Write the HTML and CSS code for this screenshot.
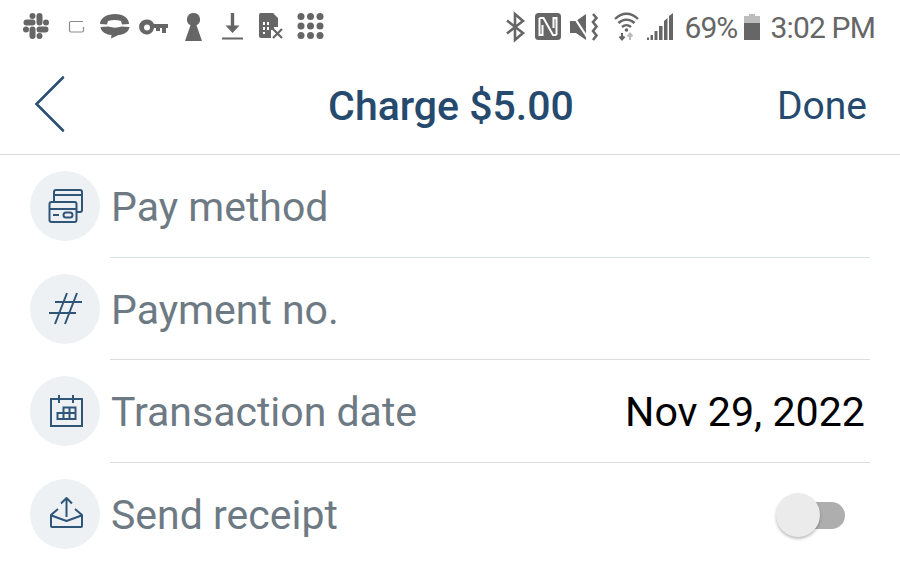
FILE: index.html
```html
<!DOCTYPE html>
<html lang="en">
<head>
  <meta charset="UTF-8">
  <meta name="viewport" content="width=device-width, initial-scale=1.0">
  <title>Charge $5.00</title>
  <link rel="stylesheet" href="styles.css">
</head>
<body>
  <div class="status-bar">
    <div class="status-left">
      <svg class="cell" viewBox="17 0 39 54">
        <g fill="none" stroke="#666" stroke-width="6" stroke-linecap="round">
          <path d="M26.5 22.5h6M39.5 16v6.500M39.500 29.500h6M32.500 29.500v6.500"/>
        </g>
        <g fill="#666"><circle cx="32.500" cy="16" r="3"/><circle cx="46" cy="22.500" r="3"/><circle cx="39.500" cy="36" r="3"/><circle cx="26" cy="29.500" r="3"/></g>
      </svg>
      <svg class="cell" viewBox="56 0 39 54">
        <path d="M83 21.500H71a1.500 1.500 0 0 0-1.500 1.500v7.500a1.500 1.500 0 0 0 1.500 1.500h11a1.500 1.500 0 0 0 1.500-1.500V27" fill="none" stroke="#8a8a8a" stroke-width="1.200"/>
      </svg>
      <svg class="cell" viewBox="95 0 39 54">
        <path d="M100 24c0-6 7-10 15-10s14 4 14 10l-7 .5-1-3.500c-4-1.500-9-1.500-13 0l-1 3.500z" fill="#666"/>
        <path d="M100.500 27l8-.5c4 1.500 9 1.500 13 0l8 .5c-.5 4.500-5 7.500-11 8l-7.500 3.500.5-3.500c-6-.5-10.500-3.500-11-8z" fill="#666"/>
      </svg>
      <svg class="cell" viewBox="134 0 39 54">
        <path d="M147 19.500a7.500 7.500 0 0 1 7 4.500h14v4h-2v5h-4v-5h-2v3h-4v-3h-2a7.500 7.500 0 1 1-7-8.500zm0 5a3 3 0 1 0 0 6 3 3 0 0 0 0-6z" fill="#666"/>
      </svg>
      <svg class="cell" viewBox="173 0 39 54">
        <path d="M193.500 13a6.500 6.500 0 0 1 3 12.300L202 41h-17l5.500-15.700a6.500 6.500 0 0 1 3-12.300z" fill="#666"/>
      </svg>
      <svg class="cell" viewBox="212 0 39 54">
        <path d="M230.800 13h3.400v12.500h5.300l-7 7.500-7-7.500h5.300zM222 37.500h21v2h-21z" fill="#666"/>
      </svg>
      <svg class="cell" viewBox="251 0 39 54">
        <path d="M261 13h12l5 5v9h-4v3h-3v8h-10a2 2 0 0 1-2-2V15a2 2 0 0 1 2-2z" fill="#666"/>
        <path d="M263 22h2v3h-2zM267 22h2v3h-2zM263 27h2v3h-2zM267 27h2v3h-2zM263 32h2v2h-2z" fill="#fff"/>
        <path d="M273 29l9 9M282 29l-9 9" stroke="#666" stroke-width="2.200" fill="none"/>
      </svg>
      <svg class="cell" viewBox="290 0 39 54">
        <g fill="#666">
          <circle cx="301" cy="16.500" r="3.500"/><circle cx="310.500" cy="16.500" r="3.500"/><circle cx="320" cy="16.500" r="3.500"/>
          <circle cx="301" cy="26" r="3.500"/><circle cx="310.500" cy="26" r="3.500"/><circle cx="320" cy="26" r="3.500"/>
          <circle cx="301" cy="35.500" r="3.500"/><circle cx="310.500" cy="35.500" r="3.500"/><circle cx="320" cy="35.500" r="3.500"/>
        </g>
      </svg>
    </div>
    <div class="status-right">
      <svg class="st-bt" viewBox="500 0 30 54">
        <path d="M507 20.500l16 12.500-8 7V14l8 7-16 12.500" fill="none" stroke="#666" stroke-width="2.600"/>
      </svg>
      <svg class="st-nfc" viewBox="530 0 36 54">
        <rect x="535" y="13" width="26" height="27" rx="3.500" fill="#666"/>
        <path d="M539.500 18h4l9.500 17h3.500M539.500 18v17h3V25M556.500 35V18h-3v10" fill="none" stroke="#fff" stroke-width="2"/>
      </svg>
      <svg class="st-mute" viewBox="566 0 38 54">
        <path d="M570 21h6l10-7v26l-10-7h-6z" fill="#666"/>
        <path d="M572 14l17 26" stroke="#fff" stroke-width="2.200"/>
        <path d="M593 14l3.500 4-3.500 4 3.500 4.500-3.500 4.500 3.500 4.500-3.500 4.500" fill="none" stroke="#666" stroke-width="2.600"/>
      </svg>
      <svg class="st-wifi" viewBox="604 0 40 54">
        <g fill="none" stroke="#666" stroke-width="2.400">
          <path d="M615 19c7-7 16-7 23 0M618.500 23c5-4.500 11-4.500 16 0M622 27c3-2.500 6-2.500 9 0"/>
        </g>
        <circle cx="626.500" cy="30" r="1.800" fill="#666"/>
        <path d="M622 33v6M619.500 36.500l2.500 3 2.500-3" fill="none" stroke="#666" stroke-width="2"/>
        <path d="M630 40v-6M627.500 36.500l2.500-3 2.500 3" fill="none" stroke="#bbb" stroke-width="2"/>
      </svg>
      <svg class="st-signal" viewBox="644 0 35 54">
        <path d="M647 37.500h2v2.500h-2zM650.500 35h2.500v5h-2.500zM654.500 31h3v9h-3zM659 26h3.500v14H659zM664 21l3.500-3v22H664zM669 16l4-3v27h-4z" fill="#666"/>
      </svg>
      <span class="st-pct">69%</span>
      <svg class="st-batt" viewBox="740 0 24 54">
        <path d="M749 14h6v2h5v7h-16v-7h5z" fill="#bdbdbd"/>
        <path d="M744 23h16v17h-16z" fill="#666"/>
      </svg>
      <span class="st-time">3:02 PM</span>
    </div>
  </div>

  <div class="top-bar">
    <div class="back">
      <svg width="40" height="70" viewBox="30 70 40 70">
        <path d="M63 78.500L36.500 105 63 131.500" fill="none" stroke="#2a4f73" stroke-width="2.600" stroke-linecap="round"/>
      </svg>
    </div>
    <div class="title">Charge $5.00</div>
    <div class="done">Done</div>
  </div>

  <div class="form">
    <div class="row">
      <div class="circle">
        <svg class="ic" viewBox="0 0 70 70">
          <g fill="none" stroke="#2f5579" stroke-width="2">
            <path d="M24 31V21a2 2 0 0 1 2-2h24a2 2 0 0 1 2 2v18a2 2 0 0 1-2 2h-3"/>
            <path d="M24 24h28"/>
            <rect x="19.500" y="31" width="27" height="20" rx="2" fill="#eef1f4"/>
            <path d="M19.500 38h27M23 44h6"/>
            <rect x="33.500" y="41.500" width="9" height="5" rx="2.500"/>
          </g>
        </svg>
      </div>
      <div class="field first">
        <span class="label">Pay method</span>
      </div>
    </div>
    <div class="row">
      <div class="circle">
        <svg class="ic" viewBox="0 0 70 70">
          <path d="M25 28h27M19 39h27M37 19L25 50M47 19L35 50" fill="none" stroke="#2f5579" stroke-width="2"/>
        </svg>
      </div>
      <div class="field">
        <span class="label">Payment no.</span>
      </div>
    </div>
    <div class="row">
      <div class="circle">
        <svg class="ic" viewBox="0 0 70 70">
          <g fill="none" stroke="#2f5579" stroke-width="2">
            <path d="M21 23h31v27H21z"/>
            <path d="M29 19v8M43 19v8" />
            <path d="M27.500 37h18M33.500 31.500h12V43h-18v-6h6zM33.500 31.500V43M39.500 31.500V43"/>
          </g>
        </svg>
      </div>
      <div class="field">
        <span class="label">Transaction date</span>
        <span class="value">Nov 29, 2022</span>
      </div>
    </div>
    <div class="row">
      <div class="circle">
        <svg class="ic" viewBox="0 0 70 70">
          <g fill="none" stroke="#2f5579" stroke-width="2" stroke-linejoin="round">
            <path d="M28 30l-7 6v11a1 1 0 0 0 1 1h29a1 1 0 0 0 1-1V36l-7-6"/>
            <path d="M21.500 36.500L36.500 42 51.500 36.500"/>
            <path d="M36.500 38V19M31 24.500l5.500-5.500 5.500 5.500"/>
          </g>
        </svg>
      </div>
      <div class="field last">
        <span class="label">Send receipt</span>
        <div class="toggle"><div class="track"></div><div class="knob"></div></div>
      </div>
    </div>
  </div>
</body>
</html>
```

FILE: styles.css
```css
body {
  font-family: Roboto, Arial, sans-serif;
  margin: 0;
  background: #fff;
  height: 569px;
  overflow: hidden;
}
.status-bar {
  display: flex;
  justify-content: space-between;
  height: 54px;
  padding-left: 17px;
  padding-right: 25px;
  color: #666;
  font-size: 30px;
}
.status-left,
.status-right {
  display: flex;
  align-items: center;
}
.cell {
  width: 39px;
  height: 54px;
}
.status-right svg {
  height: 54px;
}
.st-bt { width: 30px; }
.st-nfc { width: 36px; }
.st-mute { width: 38px; }
.st-wifi { width: 40px; }
.st-signal { width: 35px; margin-right: 6px; }
.st-pct { width: 51px; margin-right: 4px; white-space: nowrap; letter-spacing: -1px; }
.st-batt { width: 24px; margin-right: 7px; }
.st-time { white-space: nowrap; letter-spacing: -0.85px; }

.top-bar {
  display: grid;
  grid-template-columns: 1fr auto 1fr;
  align-items: center;
  height: 100px;
  border-bottom: 1px solid #dcdcdc;
}
.back {
  display: flex;
  padding-left: 30px;
}
.title {
  font-size: 41px;
  font-weight: 500;
  color: #264a6e;
  padding-top: 3px;
  padding-left: 2px;
}
.done {
  text-align: right;
  font-size: 39px;
  color: #264a6e;
  padding-top: 4px;
  padding-right: 33px;
}

.row {
  display: flex;
  align-items: center;
  height: 102.5px;
  padding-left: 30px;
  padding-right: 30px;
}
.circle {
  flex: none;
  width: 70px;
  height: 70px;
  border-radius: 50%;
  background: #eef1f4;
  margin-right: 10px;
}
.ic {
  display: block;
  width: 70px;
  height: 70px;
}
.field {
  flex: 1;
  box-sizing: border-box;
  height: 100%;
  display: flex;
  align-items: center;
  justify-content: space-between;
  border-bottom: 1px solid #dddddd;
  padding-top: 3px;
}
.field.first {
  border-bottom-color: #d5e6e3;
}
.field.last {
  border-bottom: none;
}
.label {
  font-size: 41px;
  color: #6d7a84;
  padding-left: 1px;
}
.value {
  font-size: 41.2px;
  color: #000;
  padding-right: 5px;
}
.toggle {
  position: relative;
  width: 70px;
  height: 44px;
  margin-right: 25px;
  display: flex;
  align-items: center;
  justify-content: flex-end;
}
.track {
  width: 60px;
  height: 27px;
  border-radius: 14px;
  background: #aeaeae;
}
.knob {
  position: absolute;
  left: 1px;
  top: 0;
  width: 44px;
  height: 44px;
  border-radius: 50%;
  background: #ebebeb;
  box-shadow: 0 2px 3px rgba(0, 0, 0, 0.25);
}
```
